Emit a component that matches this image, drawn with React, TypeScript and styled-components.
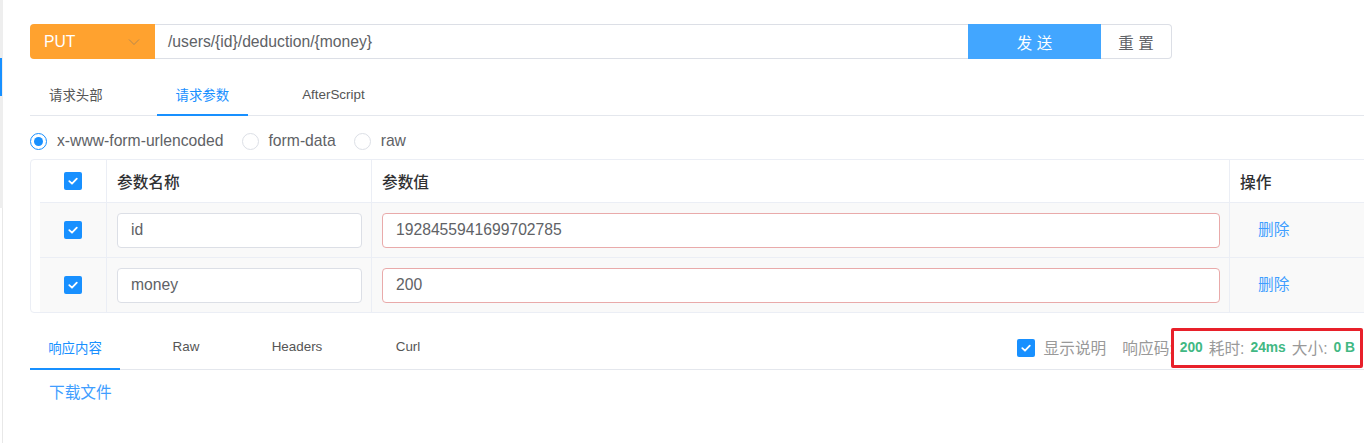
import React from "react";
import styled, { createGlobalStyle } from "styled-components";

const GlobalStyle = createGlobalStyle`
  html, body { margin: 0; padding: 0; background: #fff; overflow: hidden; }
  body { font-family: "Liberation Sans", "Noto Sans CJK SC", Arial, sans-serif; color: #606266; }
  * { box-sizing: border-box; }
`;

const Page = styled.div`
  display: flex;
  width: 1364px;
  height: 443px;
  overflow: hidden;
`;

const Sidebar = styled.div`
  width: 3px;
  flex: none;
  border-right: 1px solid #e8e8e8;
`;

const Track = styled.div`
  height: 208px;
  width: 3px;
  background: #eeeeee;
  padding-top: 58px;
`;

const Thumb = styled.div`
  height: 38px;
  width: 2px;
  background: #1890ff;
`;

const Main = styled.div`
  flex: 1;
  min-width: 0;
  padding: 24px 0 0 27px;
`;

const RequestBar = styled.div`
  display: flex;
  width: 1142px;
  height: 35px;
`;

const MethodSelect = styled.div`
  width: 125px;
  flex: none;
  background: #ffa22f;
  border-radius: 4px 0 0 4px;
  display: flex;
  align-items: center;
  justify-content: space-between;
  padding: 0 15px 0 14px;
  color: #fff;
  font-size: 15.7px;
`;

const UrlInput = styled.div`
  flex: 1;
  border: 1px solid #dcdfe6;
  border-left: none;
  border-right: none;
  display: flex;
  align-items: center;
  padding-left: 13px;
  font-size: 15.7px;
  color: #606266;
`;

const SendButton = styled.div`
  width: 133px;
  flex: none;
  background: #42a6ff;
  color: #fff;
  display: flex;
  align-items: center;
  justify-content: center;
  font-size: 15.5px;
  white-space: pre;
`;

const ResetButton = styled.div`
  width: 71px;
  flex: none;
  border: 1px solid #dcdfe6;
  border-left: none;
  border-radius: 0 4px 4px 0;
  color: #606266;
  display: flex;
  align-items: center;
  justify-content: center;
  font-size: 15.5px;
  white-space: pre;
`;

const TabBar = styled.div<{ $mt: number; $h: number; $gap: number }>`
  display: flex;
  align-items: stretch;
  gap: ${(p) => p.$gap}px;
  margin-top: ${(p) => p.$mt}px;
  height: ${(p) => p.$h}px;
  border-bottom: 1px solid #e4e7ed;
`;

const Tab = styled.div<{ $active?: boolean; $w?: number }>`
  position: relative;
  display: flex;
  align-items: center;
  justify-content: center;
  padding-bottom: 2px;
  ${(p) => (p.$w ? `width: ${p.$w}px;` : "padding-left: 19px; padding-right: 19px;")}
  font-size: 13.4px;
  color: ${(p) => (p.$active ? "#1890ff" : "#555")};
  ${(p) =>
    p.$active
      ? `&::after { content: ""; position: absolute; left: 0; right: 0; bottom: -1px; height: 2px; background: #1890ff; }`
      : ""}
`;

const RadioRow = styled.div`
  display: flex;
  align-items: center;
  height: 20px;
  margin-top: 15px;
`;

const RadioItem = styled.label`
  display: flex;
  align-items: center;
  gap: 10px;
  margin-right: 18px;
  font-size: 15.7px;
  color: #606266;
`;

const RadioCircle = styled.span<{ $checked?: boolean }>`
  width: 17px;
  height: 17px;
  border-radius: 50%;
  border: 1px solid ${(p) => (p.$checked ? "#1890ff" : "#dcdfe6")};
  display: flex;
  align-items: center;
  justify-content: center;
  &::after {
    content: "";
    width: 9px;
    height: 9px;
    border-radius: 50%;
    background: ${(p) => (p.$checked ? "#1890ff" : "transparent")};
  }
`;

const Table = styled.div`
  margin-top: 8px;
  width: 1345px;
  border: 1px solid #ebeef5;
  border-radius: 4px;
  padding-left: 9px;
`;

const Row = styled.div<{ $header?: boolean }>`
  display: grid;
  grid-template-columns: 66px 265px 858px 1fr;
  height: ${(p) => (p.$header ? 42 : 55)}px;
  background: ${(p) => (p.$header ? "#fff" : "#f9f9f9")};
  & + & { border-top: 1px solid #ebeef5; }
`;

const Cell = styled.div<{ $center?: boolean; $pl?: number }>`
  display: flex;
  align-items: center;
  justify-content: ${(p) => (p.$center ? "center" : "flex-start")};
  padding: 0 9px 0 ${(p) => p.$pl ?? 10}px;
  & + & { border-left: 1px solid #ebeef5; }
`;

const HeadText = styled.span`
  font-size: 15.7px;
  color: #303133;
  font-weight: 500;
`;

const Input = styled.div<{ $error?: boolean }>`
  width: 100%;
  height: 35px;
  border: 1px solid ${(p) => (p.$error ? "#e9aaaa" : "#dcdfe6")};
  border-radius: 4px;
  background: #fff;
  display: flex;
  align-items: center;
  padding-left: 13px;
  font-size: 15.7px;
  color: #606266;
`;

const LinkText = styled.span`
  font-size: 15.7px;
  color: #409eff;
  line-height: 1;
`;

const CheckBoxBox = styled.span`
  width: 18px;
  height: 18px;
  border-radius: 2px;
  background: #1890ff;
  display: inline-flex;
  align-items: center;
  justify-content: center;
  flex: none;
`;

const Spacer = styled.div`
  flex: 1;
`;

const RightGroup = styled.div`
  display: flex;
  align-items: center;
  padding-right: 3px;
`;

const Gray = styled.span<{ $ml?: number }>`
  font-size: 15.7px;
  color: #999;
  margin-left: ${(p) => p.$ml ?? 0}px;
`;

const StatsBox = styled.div`
  position: relative;
  display: flex;
  align-items: center;
`;

const Value = styled.span`
  font-size: 13.8px;
  font-weight: bold;
  color: #41b883;
  margin: 0 6px;
`;

const Highlight = styled.div`
  position: absolute;
  left: -3px;
  right: -2px;
  top: 50%;
  height: 40px;
  transform: translateY(-50%);
  border: 3px solid #e8202a;
  border-radius: 2px;
  pointer-events: none;
`;

const Download = styled.div`
  padding: 14px 0 0 19px;
`;

const Check = () => (
  <CheckBoxBox>
    <svg width="12" height="12" viewBox="0 0 12 12">
      <path d="M2.3 6.2 L5 8.7 L9.8 3.6" fill="none" stroke="#fff" strokeWidth="1.8" strokeLinecap="round" strokeLinejoin="round" />
    </svg>
  </CheckBoxBox>
);

const params = [
  { name: "id", value: "1928455941699702785" },
  { name: "money", value: "200" },
];

export default function App() {
  return (
    <>
      <GlobalStyle />
      <Page>
        <Sidebar>
          <Track>
            <Thumb />
          </Track>
        </Sidebar>
        <Main>
          <RequestBar>
            <MethodSelect>
              <span>PUT</span>
              <svg width="12" height="8" viewBox="0 0 12 8">
                <path d="M1 1.5 L6 6.5 L11 1.5" fill="none" stroke="rgba(110,110,110,0.5)" strokeWidth="1" />
              </svg>
            </MethodSelect>
            <UrlInput>/users/{"{id}"}/deduction/{"{money}"}</UrlInput>
            <SendButton>发 送</SendButton>
            <ResetButton>重 置</ResetButton>
          </RequestBar>

          <TabBar $mt={16} $h={41} $gap={35}>
            <Tab>请求头部</Tab>
            <Tab $active>请求参数</Tab>
            <Tab>AfterScript</Tab>
          </TabBar>

          <RadioRow>
            <RadioItem>
              <RadioCircle $checked />
              x-www-form-urlencoded
            </RadioItem>
            <RadioItem>
              <RadioCircle />
              form-data
            </RadioItem>
            <RadioItem>
              <RadioCircle />
              raw
            </RadioItem>
          </RadioRow>

          <Table>
            <Row $header>
              <Cell $center $pl={9}>
                <Check />
              </Cell>
              <Cell>
                <HeadText>参数名称</HeadText>
              </Cell>
              <Cell>
                <HeadText>参数值</HeadText>
              </Cell>
              <Cell>
                <HeadText>操作</HeadText>
              </Cell>
            </Row>
            {params.map((p) => (
              <Row key={p.name}>
                <Cell $center $pl={9}>
                  <Check />
                </Cell>
                <Cell>
                  <Input>{p.name}</Input>
                </Cell>
                <Cell>
                  <Input $error>{p.value}</Input>
                </Cell>
                <Cell $pl={28}>
                  <LinkText>删除</LinkText>
                </Cell>
              </Row>
            ))}
          </Table>

          <TabBar $mt={13} $h={44} $gap={21}>
            <Tab $active $w={90}>响应内容</Tab>
            <Tab $w={90}>Raw</Tab>
            <Tab $w={90}>Headers</Tab>
            <Tab $w={90}>Curl</Tab>
            <Spacer />
            <RightGroup>
              <Check />
              <Gray $ml={9}>显示说明</Gray>
              <Gray $ml={16}>响应码:</Gray>
              <StatsBox>
                <Value>200</Value>
                <Gray>耗时:</Gray>
                <Value>24ms</Value>
                <Gray>大小:</Gray>
                <Value>0 B</Value>
                <Highlight />
              </StatsBox>
            </RightGroup>
          </TabBar>

          <Download>
            <LinkText>下载文件</LinkText>
          </Download>
        </Main>
      </Page>
    </>
  );
}
